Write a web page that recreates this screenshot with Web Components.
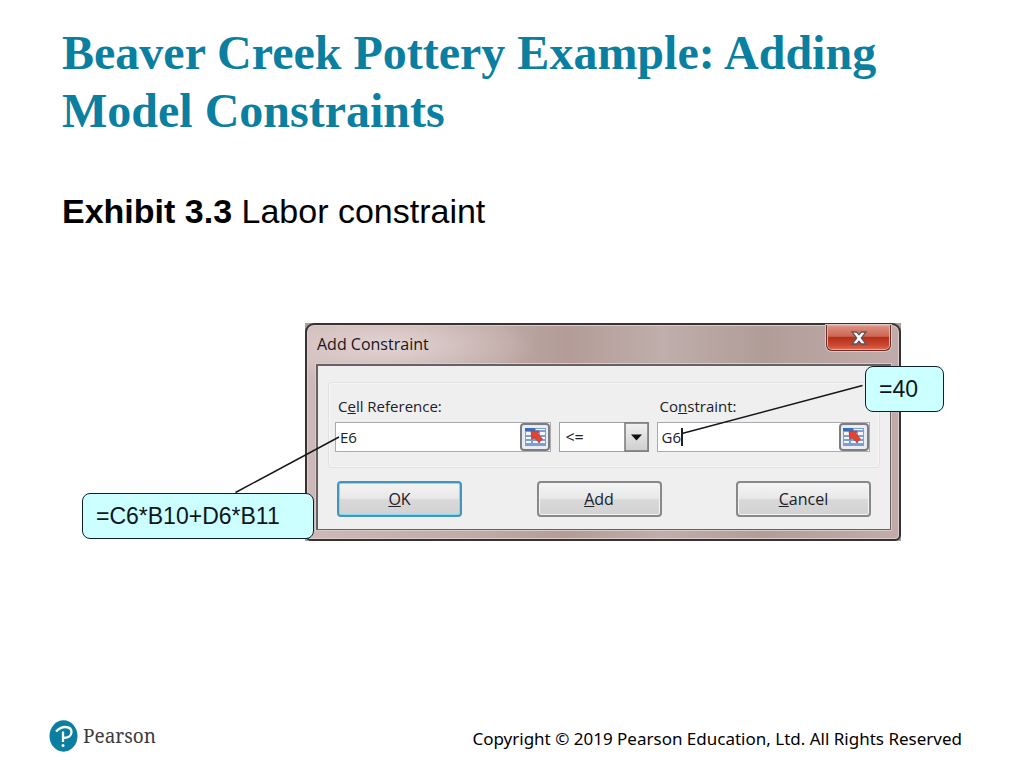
<!DOCTYPE html>
<html lang="en">
<head>
<meta charset="utf-8">
<title>Beaver Creek Pottery Example: Adding Model Constraints</title>
<style>
  body { margin: 0; background: #fff; color: #000; font-family: "Liberation Sans", Arial, sans-serif; }
</style>
</head>
<body>
<lesson-slide>
  <span slot="title">Beaver Creek Pottery Example: Adding Model Constraints</span>
  <span slot="caption"><b>Exhibit 3.3</b> Labor constraint</span>
  <annotated-figure>
    <constraint-dialog></constraint-dialog>
    <call-out slot="left">=C6*B10+D6*B11</call-out>
    <call-out slot="right">=40</call-out>
  </annotated-figure>
  <pearson-logo slot="logo"></pearson-logo>
  <span slot="copyright">Copyright © 2019 Pearson Education, Ltd. All Rights Reserved</span>
</lesson-slide>

<script>
const define = (name, html) => {
  const template = document.createElement('template');
  template.innerHTML = html;
  customElements.define(name, class extends HTMLElement {
    constructor() {
      super();
      this.attachShadow({ mode: 'open' }).append(template.content.cloneNode(true));
    }
  });
};

define('lesson-slide', `
<style>
  :host { display: flex; flex-direction: column; min-height: 100vh; box-sizing: border-box; padding: 24px 62px 16px; }
  h1 { margin: 0; font: bold 48px/58px "Liberation Serif", "Times New Roman", serif; color: #0b7fa0; }
  p { margin: 52px 0 92px; font-size: 34px; line-height: 39px; }
  main { margin: 0 -13px 0 -11px; }
  footer { display: flex; align-items: center; justify-content: space-between; margin: auto 0 0 -13px; }
  small { padding-top: 6px; font: 17px/24px "Noto Sans", sans-serif; }
</style>
<h1><slot name="title"></slot></h1>
<p><slot name="caption"></slot></p>
<main><slot></slot></main>
<footer><slot name="logo"></slot><small><slot name="copyright"></slot></small></footer>`);

define('annotated-figure', `
<style>
  :host { display: block; position: relative; max-width: 862px; margin: 0 auto; }
  .picture { margin: 0 43px 0 223px; }
  svg { position: absolute; inset: 0; width: 100%; height: 100%; pointer-events: none; }
  .left { position: absolute; left: 0; bottom: 2px; width: 232px; }
  .right { position: absolute; right: 0; top: 43px; width: 79px; }
</style>
<div class="picture"><slot></slot></div>
<svg viewBox="0 0 862 218" preserveAspectRatio="none" fill="none" stroke="#16161a" stroke-width="1.5" aria-hidden="true">
  <path d="M153.500 169.500L257 114M600 110.500L780.500 62.500"/>
</svg>
<div class="left"><slot name="left"></slot></div>
<div class="right"><slot name="right"></slot></div>`);

define('call-out', `
<style>
  :host { display: block; box-sizing: border-box; padding: 0 13px; border: 1px solid #10202a; border-radius: 8px;
    background: #cff; color: #10151c; font-size: 23px; line-height: 44px; white-space: nowrap; }
</style>
<slot></slot>`);

define('constraint-dialog', `
<style>
  :host { display: block; font: 16px/20px "Open Sans", "Segoe UI", sans-serif; color: #202028; background: #a5a0a0; }
  section { border: 2px solid #383234; border-radius: 9px 9px 6px 6px; padding: 0 8px 9px 9px;
    background: radial-gradient(ellipse 150px 40px at 80px 20px, #e2d3d2, #d8c8c700),
      linear-gradient(90deg, #cdb9b8, #bda8a4 32%, #b39c97 44%, #bfaeab 60%, #b19d98 77%, #c1acaa);
    box-shadow: inset 0 0 0 1px #dccdcb; }
  header { display: flex; justify-content: space-between; height: 39px; }
  h2 { margin: 0; padding: 2px 0 0 1px; font-size: 16px; line-height: 34px; font-weight: 400; color: #1b1519; }
  .close { display: grid; place-items: center; width: 65px; height: 26px; padding: 0; border: 1px solid #6c2d28; border-top: 0;
    border-radius: 0 0 6px 6px; box-shadow: inset 0 0 0 1px #edaa9c, 0 0 0 1px #dac7c4;
    background: linear-gradient(#dc9485, #cd6654 45%, #b5301c 50%, #c94730 80%, #e06d51); }
  .body { padding: 16px 10px 12px; border: 2px solid #686163; border-width: 2px 1px 1px 2px; background: #efefef; box-shadow: 0 0 0 1px #dacbca; }
  .group { display: grid; grid-template-columns: 216fr 89fr 213fr; gap: 8px; align-items: end; padding: 13px 9px 15px 6px;
    border: 1px solid #dfe1e2; border-radius: 4px; box-shadow: inset 0 0 0 1px #f7f7f7; }
  .compare { position: relative; height: 30px; }
  select { appearance: none; box-sizing: border-box; width: 100%; height: 30px; padding: 0 5px; border: 1px solid #a2a2a2;
    border-radius: 0; background: #fff; color: #202028; font: 16px/20px "Open Sans", sans-serif; }
  .compare svg { position: absolute; right: 0; top: 0; pointer-events: none; }
  .actions { display: flex; justify-content: space-between; padding: 13px 9px 0; }
</style>
<section aria-label="Add Constraint">
  <header>
    <h2>Add Constraint</h2>
    <button class="close" type="button" aria-label="Close">
      <svg width="18" height="16" viewBox="0 0 18 16"><path d="M2 2h4.600L9 4.800 11.400 2H16l-4.700 6 4.700 6h-4.600L9 11.200 6.600 14H2l4.700-6z" fill="#fff" stroke="#62535a" stroke-width="1.300"/></svg>
    </button>
  </header>
  <div class="body">
    <div class="group">
      <range-field value="E6">C<u>e</u>ll Reference:</range-field>
      <div class="compare">
        <select aria-label="Comparison"><option>&lt;=</option><option>=</option><option>&gt;=</option></select>
        <svg width="25" height="30" viewBox="0 0 25 30"><defs><linearGradient id="g" x2="0" y2="1"><stop stop-color="#f1f1f1"/><stop offset="1" stop-color="#cecece"/></linearGradient></defs><rect x="1" y="1" width="23" height="28" fill="url(#g)" stroke="#77777b" stroke-width="1.500"/><path d="M7 12.500h11l-5.500 6z" fill="#111"/></svg>
      </div>
      <range-field value="G6" caret>Co<u>n</u>straint:</range-field>
    </div>
    <div class="actions">
      <dialog-button primary><u>O</u>K</dialog-button>
      <dialog-button><u>A</u>dd</dialog-button>
      <dialog-button wide><u>C</u>ancel</dialog-button>
    </div>
  </div>
</section>`);

define('dialog-button', `
<style>
  :host { display: block; width: 125px; }
  :host([wide]) { width: 135px; }
  button { width: 100%; height: 36px; padding: 0; border: 2px solid #88888a; border-radius: 4px; color: #202028;
    font: 16px/20px "Open Sans", sans-serif; background: linear-gradient(#f4f4f4, #e8e8e8 48%, #d9d9d9 52%, #d2d2d2);
    box-shadow: inset 0 0 0 1px #f4f4f4; }
  :host([primary]) button { border-color: #4296ba; box-shadow: inset 0 0 0 1px #88d7ee; }
</style>
<button type="button"><slot></slot></button>`);

customElements.define('range-field', class extends HTMLElement {
  constructor() {
    super();
    this.attachShadow({ mode: 'open' }).innerHTML = `
<style>
  :host { display: block; min-width: 0; }
  label { display: block; margin: 0 0 6px 3px; line-height: 20px; font-size: 15px; }
  .box { position: relative; display: flex; height: 28px; border: 1px solid #aaabb0; background: #fff; }
  input { flex: 1; min-width: 0; padding: 0 4px; border: 0; outline: 0; background: none; color: #202028; font: 15px/20px "Open Sans", sans-serif; }
  button { width: 30px; height: 28px; padding: 0; border: 2px solid #7b7c84; border-radius: 4px; background: #e9edf1; display: grid; place-items: center; }
  i { display: none; position: absolute; left: 23px; top: 5px; width: 2px; height: 18px; background: #222; }
  :host([caret]) i { display: block; }
</style>
<label for="range"><slot></slot></label>
<div class="box">
  <input id="range" type="text"><i></i>
  <button type="button" aria-label="Collapse dialog">
    <svg width="23" height="20" viewBox="0 0 23 20">
      <path d="M1 1h21v18H1z" fill="#7b9fd3"/>
      <path d="M1 1h10v3H1z" fill="#3d6cb8"/>
      <path d="M2 5h5v3H2zM9 5h5v3H9zM16 5h5v3h-5zM2 10h5v2H2zM16 10h5v2h-5zM2 14h5v2H2zM9 14h5v2H9zM16 14h5v2h-5zM12 2h9v1h-9z" fill="#f4f8fd"/>
      <path d="M7 4.500l8-.5-1.500 2.500 5 5.500-3.500 3.500-5-5L8 12.500z" fill="#e34432" stroke="#c12f2d" stroke-width=".7"/>
    </svg>
  </button>
</div>`;
    this.shadowRoot.querySelector('input').value = this.getAttribute('value');
  }
});

define('pearson-logo', `
<style>
  :host { display: flex; align-items: center; gap: 5px; color: #3c3c3e; font: 19px/32px "Noto Serif", "Liberation Serif", serif; }
</style>
<svg width="29" height="32" viewBox="0 0 29 32" aria-hidden="true">
  <ellipse cx="14.500" cy="16" rx="14" ry="15.700" fill="#0b7f9f"/>
  <path d="M7 11.500C9.500 9 12.500 7 16 7c4 0 6.500 2 6.500 5.200 0 3.600-3.500 5.800-8.500 5.800M14 11.500V22" fill="none" stroke="#fff" stroke-width="2.300"/>
  <circle cx="14" cy="25.500" r="1.500" fill="#fff"/>
</svg>
<span>Pearson</span>`);
</script>
</body>
</html>
